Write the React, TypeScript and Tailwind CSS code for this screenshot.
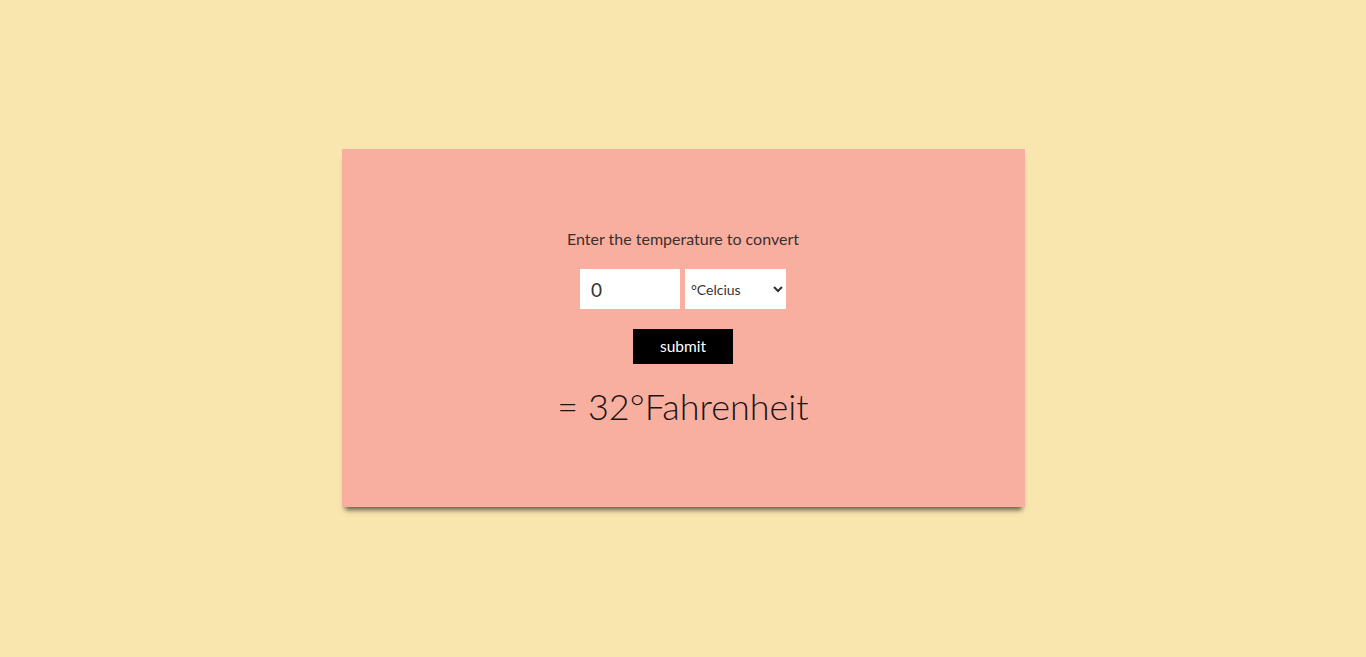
import React from "react";

export default function App() {
  return (
    <div
      className="w-full h-[657px] bg-[#f9e6ae] flex items-start justify-center pt-[149px]"
      style={{ fontFamily: "Lato, 'Noto Sans', sans-serif" }}
    >
      <div className="w-[683px] h-[358px] bg-[#f9afa0] shadow-[0_6px_5px_-3px_rgba(0,0,0,0.6)] flex flex-col items-center pt-[80px]">
        <p className="text-[16px] leading-[20px] text-[#3a2f2f]">Enter the temperature to convert</p>
        <div className="flex gap-[5px] mt-[20px]">
          <input
            type="text"
            defaultValue="0"
            className="w-[100px] h-[40px] bg-white px-[11px] text-[19px] text-[#333] outline-none border-0"
            style={{ fontFamily: "Lato, sans-serif" }}
          />
          <select
            defaultValue="c"
            className="w-[101px] h-[40px] bg-white text-[14px] text-[#333] pl-[2px] border-0 outline-none"
            style={{ fontFamily: "Lato, sans-serif" }}
          >
            <option value="c">°Celcius</option>
            <option value="f">°Fahrenheit</option>
          </select>
        </div>
        <button className="mt-[20px] w-[100px] h-[35px] bg-black text-white text-[15.5px]" style={{ fontFamily: "Lato, sans-serif" }}>
          submit
        </button>
        <div className="mt-[20px] text-[36px] leading-[45px] text-[#1a1414] font-light">= 32°Fahrenheit</div>
      </div>
    </div>
  );
}
